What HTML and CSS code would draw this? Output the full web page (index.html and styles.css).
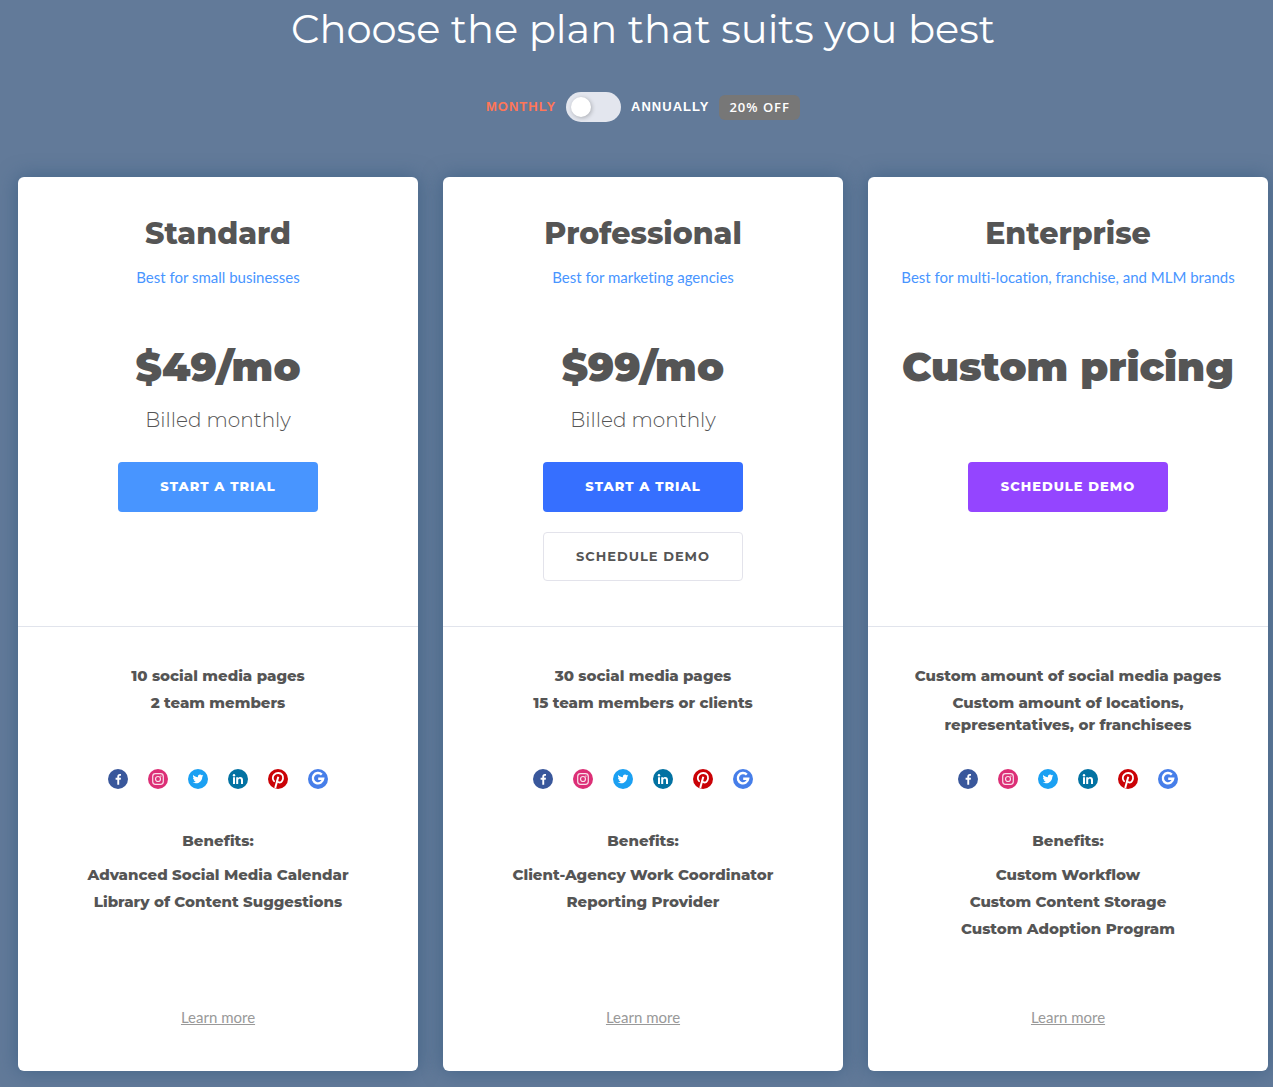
FILE: index.html
```html
<!DOCTYPE html>
<html lang="en">
<head>
<meta charset="utf-8">
<meta name="viewport" content="width=device-width, initial-scale=1">
<title>Pricing plans</title>
<link rel="stylesheet" href="styles.css">
</head>
<body>
<svg class="sprite" aria-hidden="true">
  <symbol id="facebook" viewBox="0 0 20 20"><circle cx="10" cy="10" r="10" fill="#39579b"/><path fill="#fff" d="M9.300 15.800v-5H7.600V8.800h1.700V7.400c0-1.600 1-2.500 2.400-2.500H13v1.800h-.9c-.7 0-.9.4-.9.9v1.200H13l-.3 2h-1.500v5z"/></symbol>
  <symbol id="instagram" viewBox="0 0 20 20"><circle cx="10" cy="10" r="10" fill="#dc2f76"/><g fill="none" stroke="#fff" stroke-width="1.200" stroke-opacity=".85"><rect x="4.700" y="4.700" width="10.600" height="10.600" rx="2.800"/><circle cx="10" cy="10" r="2.500"/></g><circle cx="12.900" cy="7.100" r=".7" fill="#fff"/></symbol>
  <symbol id="twitter" viewBox="0 0 20 20"><circle cx="10" cy="10" r="10" fill="#1ba0f2"/><path fill="#fff" d="M15.400 6.600c-.4.2-.8.3-1.300.4.5-.3.800-.7 1-1.200-.4.3-.9.4-1.400.5a2.200 2.200 0 0 0-3.800 2C8 8.200 6.400 7.300 5.300 6c-.6 1-.3 2.300.7 3-.4 0-.7-.1-1-.3 0 1.100.8 2 1.800 2.200-.3.1-.7.1-1 0 .3.900 1.100 1.500 2.100 1.500-.9.700-2.100 1.100-3.300.9 4.300 2.700 9.700-.2 9.700-5.600.4-.3.800-.7 1.100-1.100z"/></symbol>
  <symbol id="linkedin" viewBox="0 0 20 20"><circle cx="10" cy="10" r="10" fill="#0372a2"/><path fill="#fff" d="M5 8.200h2V15H5zM8.200 8.200h1.900v.9c.4-.7 1.100-1.100 2-1.100 2 0 2.900 1.100 2.900 3v4h-2v-3.600c0-1-.3-1.700-1.300-1.700s-1.500.7-1.500 1.700V15h-2z"/><circle cx="6" cy="6.200" r="1.200" fill="#fff"/></symbol>
  <symbol id="pinterest" viewBox="0 0 20 20"><circle cx="10" cy="10" r="10" fill="#ca0206"/><path fill="none" stroke="#fff" stroke-width="1.800" stroke-linecap="round" d="M6.100 12.200C4.400 10.600 4.300 7.500 6.200 5.600c2.200-2.200 6.300-2.100 8 .2 1.600 2.200.9 5.900-.9 7.100-1.500 1-3.400.7-4-.7"/><path fill="none" stroke="#fff" stroke-width="2" d="M10.300 7.800 7.200 19"/></symbol>
  <symbol id="google" viewBox="0 0 20 20"><circle cx="10" cy="10" r="10" fill="#467ee9"/><path fill="none" stroke="#fff" stroke-width="2.400" d="M13.800 5.600A5.200 5.200 0 1 0 15.200 9.700H10.200"/></symbol>
</svg>

<main class="pricing">
  <h1 class="pricing-title">Choose the plan that suits you best</h1>
  <div class="billing">
    <label class="billing-label billing-label-active" for="annual">MONTHLY</label>
    <input class="switch" type="checkbox" role="switch" id="annual" aria-label="Bill annually">
    <label class="billing-label" for="annual">ANNUALLY</label>
    <span class="discount">20% OFF</span>
  </div>

  <div class="plans">
    <article class="card">
      <div class="offer">
        <h2 class="plan-name">Standard</h2>
        <p class="audience">Best for small businesses</p>
        <p class="price">$49/mo</p>
        <p class="period">Billed monthly</p>
        <button class="button button-sky" type="button">START A TRIAL</button>
      </div>
      <ul class="list limits"><li>10 social media pages</li><li>2 team members</li></ul>
      <div class="networks">
        <svg role="img" aria-label="Facebook"><use href="#facebook"/></svg>
        <svg role="img" aria-label="Instagram"><use href="#instagram"/></svg>
        <svg role="img" aria-label="Twitter"><use href="#twitter"/></svg>
        <svg role="img" aria-label="LinkedIn"><use href="#linkedin"/></svg>
        <svg role="img" aria-label="Pinterest"><use href="#pinterest"/></svg>
        <svg role="img" aria-label="Google"><use href="#google"/></svg>
      </div>
      <section class="benefits">
        <h3 class="benefits-title">Benefits:</h3>
        <ul class="list"><li>Advanced Social Media Calendar</li><li>Library of Content Suggestions</li></ul>
      </section>
      <a class="more" href="#standard">Learn more</a>
    </article>

    <article class="card">
      <div class="offer">
        <h2 class="plan-name">Professional</h2>
        <p class="audience">Best for marketing agencies</p>
        <p class="price">$99/mo</p>
        <p class="period">Billed monthly</p>
        <button class="button button-blue" type="button">START A TRIAL</button>
        <button class="button button-outline" type="button">SCHEDULE DEMO</button>
      </div>
      <ul class="list limits"><li>30 social media pages</li><li>15 team members or clients</li></ul>
      <div class="networks">
        <svg role="img" aria-label="Facebook"><use href="#facebook"/></svg>
        <svg role="img" aria-label="Instagram"><use href="#instagram"/></svg>
        <svg role="img" aria-label="Twitter"><use href="#twitter"/></svg>
        <svg role="img" aria-label="LinkedIn"><use href="#linkedin"/></svg>
        <svg role="img" aria-label="Pinterest"><use href="#pinterest"/></svg>
        <svg role="img" aria-label="Google"><use href="#google"/></svg>
      </div>
      <section class="benefits">
        <h3 class="benefits-title">Benefits:</h3>
        <ul class="list"><li>Client-Agency Work Coordinator</li><li>Reporting Provider</li></ul>
      </section>
      <a class="more" href="#professional">Learn more</a>
    </article>

    <article class="card">
      <div class="offer">
        <h2 class="plan-name">Enterprise</h2>
        <p class="audience">Best for multi-location, franchise, and MLM brands</p>
        <p class="price">Custom pricing</p>
        <p class="period"></p>
        <button class="button button-violet" type="button">SCHEDULE DEMO</button>
      </div>
      <ul class="list limits"><li>Custom amount of social media pages</li><li>Custom amount of locations,<br>representatives, or franchisees</li></ul>
      <div class="networks">
        <svg role="img" aria-label="Facebook"><use href="#facebook"/></svg>
        <svg role="img" aria-label="Instagram"><use href="#instagram"/></svg>
        <svg role="img" aria-label="Twitter"><use href="#twitter"/></svg>
        <svg role="img" aria-label="LinkedIn"><use href="#linkedin"/></svg>
        <svg role="img" aria-label="Pinterest"><use href="#pinterest"/></svg>
        <svg role="img" aria-label="Google"><use href="#google"/></svg>
      </div>
      <section class="benefits">
        <h3 class="benefits-title">Benefits:</h3>
        <ul class="list"><li>Custom Workflow</li><li>Custom Content Storage</li><li>Custom Adoption Program</li></ul>
      </section>
      <a class="more" href="#enterprise">Learn more</a>
    </article>
  </div>
</main>
</body>
</html>
```
FILE: styles.css
```css
* { box-sizing: border-box; }

body {
  margin: 0;
  background: #627a99;
  color: #555;
  font-family: Montserrat, Inter, sans-serif;
  text-align: center;
}

h1, h2, h3, p, ul { margin: 0; padding: 0; }

.sprite { display: none; }

.pricing { padding: 4px 5px 16px 18px; }

.pricing-title {
  color: #fff;
  font-size: 40px;
  font-weight: 400;
  line-height: 50px;
}

.billing {
  display: flex;
  align-items: center;
  justify-content: center;
  gap: 10px;
  margin: 38px 0 55px;
  font-family: "Liberation Sans", sans-serif;
}

.billing-label {
  color: #fff;
  font-size: 13px;
  font-weight: 700;
  line-height: 20px;
  letter-spacing: 1px;
}

.billing-label-active { color: #ff7657; }

.switch {
  appearance: none;
  display: flex;
  align-items: center;
  width: 55px;
  height: 30px;
  margin: 0;
  padding: 5px;
  border-radius: 15px;
  background: #e3e6ee;
  cursor: pointer;
}

.switch::before {
  content: "";
  width: 20px;
  height: 20px;
  border-radius: 50%;
  background: #fff;
  box-shadow: 1px 1px 4px rgba(0, 0, 0, .25);
}

.switch:checked { justify-content: flex-end; }

.discount {
  padding: 2px 10px 3px;
  border-radius: 6px;
  background: #777;
  color: #fff;
  font-family: "Open Sans", sans-serif;
  font-size: 13px;
  font-weight: 600;
  line-height: 20px;
  letter-spacing: 1px;
}

.plans {
  display: grid;
  grid-template-columns: repeat(3, minmax(0, 1fr));
  grid-template-rows: repeat(5, auto);
  column-gap: 25px;
}

.card {
  display: grid;
  grid-row: span 5;
  grid-template-rows: subgrid;
  justify-items: center;
  padding-bottom: 44px;
  border-radius: 6px;
  background: #fff;
  box-shadow: 0 0 20px rgba(43, 84, 122, .6);
}

.offer {
  display: flex;
  flex-direction: column;
  align-items: center;
  justify-self: stretch;
  padding: 39px 20px 45px;
  border-bottom: 1px solid #e1e4ec;
}

.plan-name {
  font-size: 30px;
  font-weight: 800;
  line-height: 36px;
}

.audience {
  margin-top: 15px;
  color: #4895ff;
  font-family: Lato, sans-serif;
  font-size: 15px;
  font-variant-ligatures: none;
  line-height: 20px;
}

.price {
  margin-top: 55px;
  font-size: 40px;
  font-weight: 900;
  line-height: 50px;
}

.period {
  min-height: 30px;
  margin: 13px 0 27px;
  font-size: 20px;
  font-weight: 300;
  line-height: 30px;
}

.button {
  width: 200px;
  height: 50px;
  padding: 0 0 2px;
  border: 0;
  border-radius: 4px;
  color: #fff;
  font-family: inherit;
  font-size: 13px;
  font-weight: 800;
  letter-spacing: 1px;
  cursor: pointer;
}

.button-sky { background: #4895ff; }
.button-blue { background: #366fff; }
.button-violet { background: #9445ff; }

.button-outline {
  height: 49px;
  margin-top: 20px;
  border: 1px solid #e3e3eb;
  background: #fff;
  color: #555;
  font-weight: 700;
}

.list {
  display: grid;
  align-content: start;
  row-gap: 5px;
  list-style: none;
  font-size: 15px;
  font-weight: 800;
  line-height: 22px;
}

.limits { padding: 38px 20px 33px; }

.networks {
  display: flex;
  gap: 20px;
}

.networks svg {
  width: 20px;
  height: 20px;
}

.benefits { padding: 41px 20px 67px; }

.benefits-title {
  margin-bottom: 12px;
  font-size: 15px;
  font-weight: 800;
  line-height: 22px;
}

.more {
  color: #999;
  font-family: Lato, sans-serif;
  font-size: 15px;
  line-height: 20px;
}
```
